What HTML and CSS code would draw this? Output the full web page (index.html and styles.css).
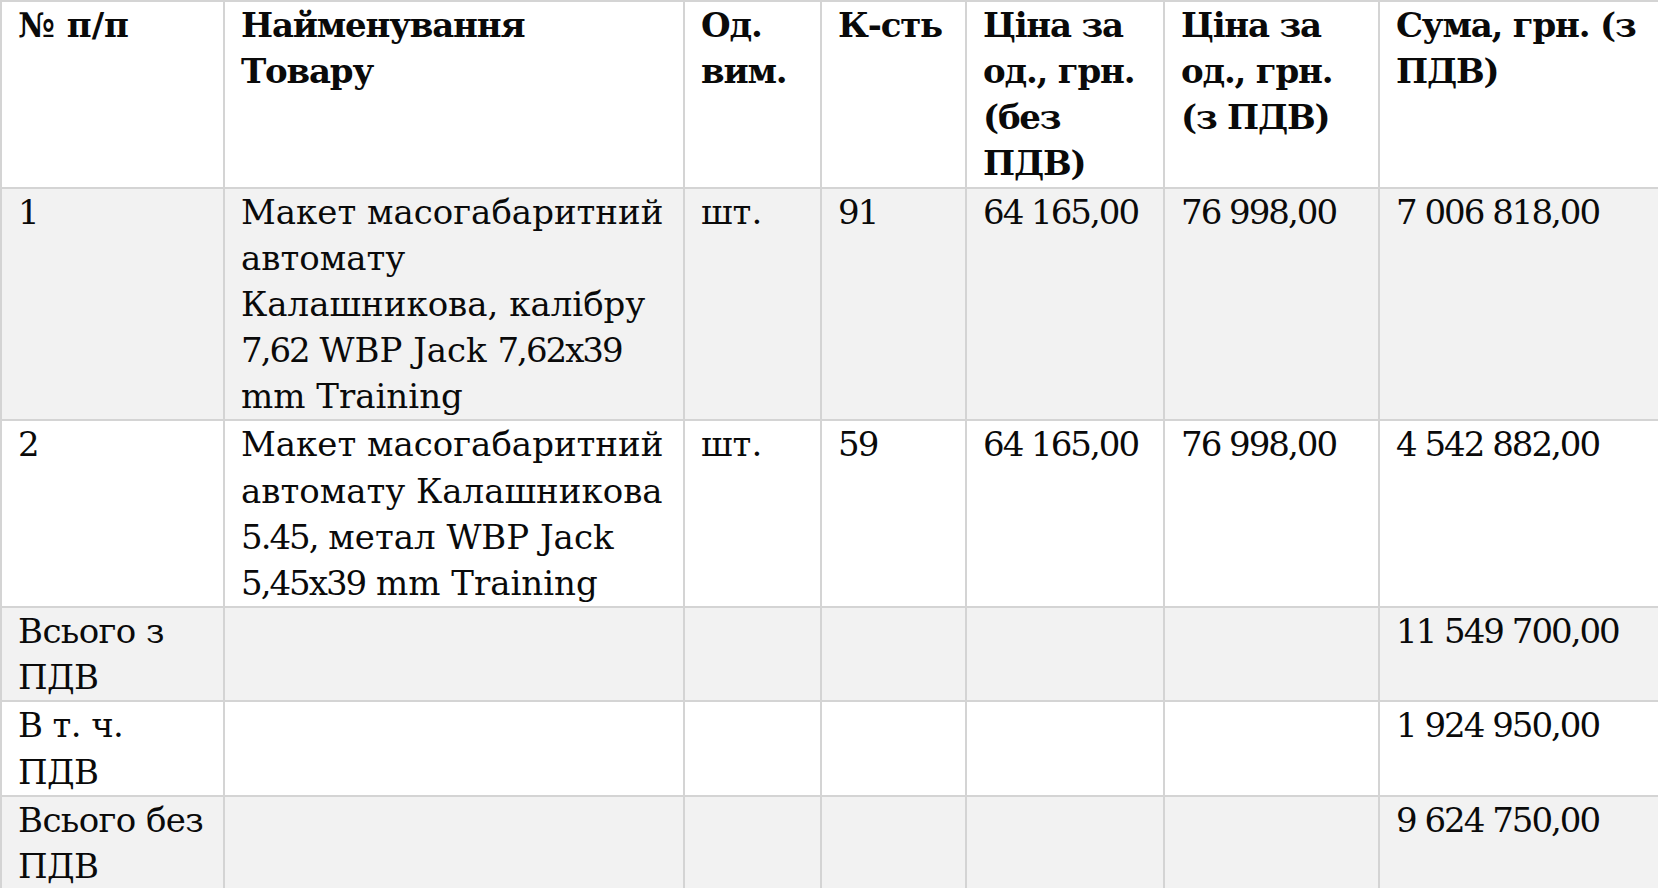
FILE: index.html
```html
<!DOCTYPE html>
<html lang="uk">
<head>
<meta charset="utf-8">
<title>Специфікація</title>
<link rel="stylesheet" href="styles.css">
</head>
<body>
<table class="spec">
  <colgroup>
    <col class="c-num">
    <col class="c-name">
    <col class="c-unit">
    <col class="c-qty">
    <col class="c-price">
    <col class="c-price-vat">
    <col class="c-sum">
  </colgroup>
  <thead>
    <tr class="row-head">
      <th class="first">№ п/п</th>
      <th>Найменування<br>Товару</th>
      <th>Од.<br>вим.</th>
      <th>К-сть</th>
      <th>Ціна за<br>од., грн.<br>(без<br>ПДВ)</th>
      <th>Ціна за<br>од., грн.<br>(з ПДВ)</th>
      <th>Сума, грн. (з<br>ПДВ)</th>
    </tr>
  </thead>
  <tbody>
    <tr class="row-alt">
      <td class="num">1</td>
      <td>Макет масогабаритний<br>автомату<br>Калашникова, калібру<br><span class="num">7,62</span> WBP Jack <span class="num">7,62x39</span><br>mm Training</td>
      <td>шт.</td>
      <td class="num">91</td>
      <td class="num">64 165,00</td>
      <td class="num">76 998,00</td>
      <td class="num">7 006 818,00</td>
    </tr>
    <tr>
      <td class="num">2</td>
      <td>Макет масогабаритний<br>автомату Калашникова<br><span class="num">5.45,</span> метал WBP Jack<br><span class="num">5,45x39</span> mm Training</td>
      <td>шт.</td>
      <td class="num">59</td>
      <td class="num">64 165,00</td>
      <td class="num">76 998,00</td>
      <td class="num">4 542 882,00</td>
    </tr>
    <tr class="row-alt">
      <td class="label">Всього з<br>ПДВ</td>
      <td></td>
      <td></td>
      <td></td>
      <td></td>
      <td></td>
      <td class="num">11 549 700,00</td>
    </tr>
    <tr>
      <td class="label">В т. ч.<br>ПДВ</td>
      <td></td>
      <td></td>
      <td></td>
      <td></td>
      <td></td>
      <td class="num">1 924 950,00</td>
    </tr>
    <tr class="row-alt">
      <td class="label">Всього без<br>ПДВ</td>
      <td></td>
      <td></td>
      <td></td>
      <td></td>
      <td></td>
      <td class="num">9 624 750,00</td>
    </tr>
  </tbody>
</table>
</body>
</html>
```
FILE: styles.css
```css
html, body {
  margin: 0;
  padding: 0;
  background: #ffffff;
  overflow: hidden;
}

.spec {
  border-collapse: collapse;
  table-layout: fixed;
  width: 1700px;
  font-family: "DejaVu Serif", "Liberation Serif", serif;
  font-size: 34px;
  line-height: 46.15px;
  color: #0a0a0a;
}

.c-num { width: 223px; }
.c-name { width: 460px; }
.c-unit { width: 137px; }
.c-qty { width: 145px; }
.c-price { width: 198px; }
.c-price-vat { width: 215px; }
.c-sum { width: 322px; }

.spec th,
.spec td {
  border: 2px solid #d4d4d4;
  padding: 0 0 0 16px;
  vertical-align: top;
  text-align: left;
  white-space: nowrap;
  overflow: hidden;
}

.spec th {
  font-weight: bold;
  letter-spacing: -1.2px;
}

.spec th.first {
  letter-spacing: 0;
}

.spec td {
  font-weight: normal;
}

.spec .num {
  letter-spacing: -2px;
}

.spec .label {
  letter-spacing: -0.6px;
}

.row-head {
  background: #ffffff;
}

.row-alt {
  background: #f2f2f2;
}
```
